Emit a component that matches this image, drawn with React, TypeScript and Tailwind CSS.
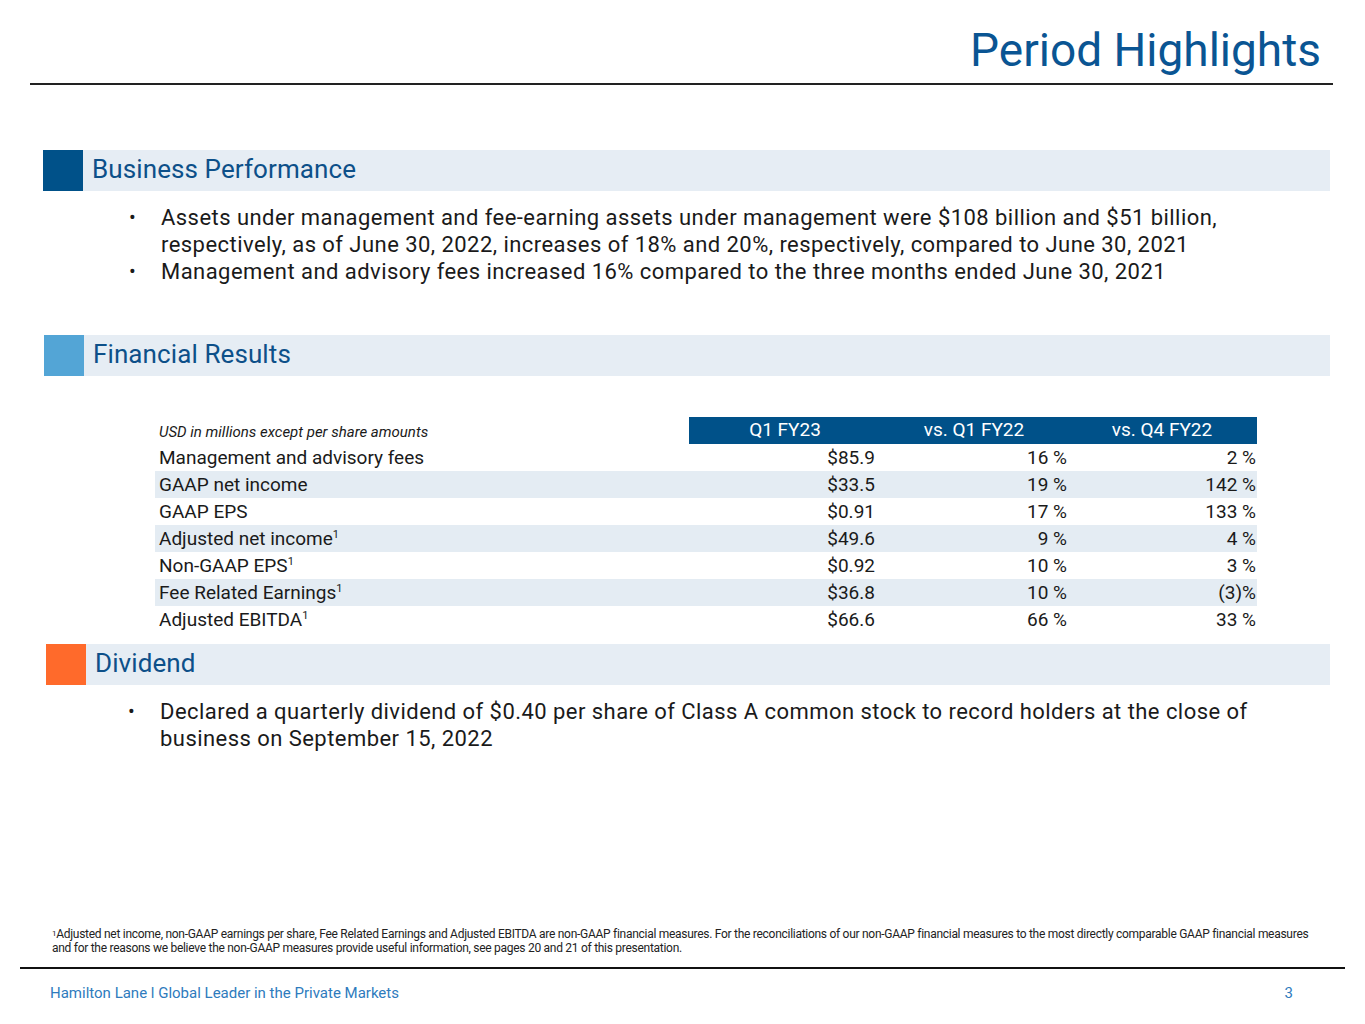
const rows = [
  { label: "Management and advisory fees", sup: false, a: "$85.9", b: "16 %", c: "2 %" },
  { label: "GAAP net income", sup: false, a: "$33.5", b: "19 %", c: "142 %" },
  { label: "GAAP EPS", sup: false, a: "$0.91", b: "17 %", c: "133 %" },
  { label: "Adjusted net income", sup: true, a: "$49.6", b: "9 %", c: "4 %" },
  { label: "Non-GAAP EPS", sup: true, a: "$0.92", b: "10 %", c: "3 %" },
  { label: "Fee Related Earnings", sup: true, a: "$36.8", b: "10 %", c: "(3)%" },
  { label: "Adjusted EBITDA", sup: true, a: "$66.6", b: "66 %", c: "33 %" },
];

function SectionBar({ title, square, offset }: { title: string; square: string; offset: string }) {
  return (
    <div className={`flex h-[41px] items-center bg-[#e6edf4] ${offset} mr-[35px]`}>
      <div className={`h-full w-[40px] ${square}`}></div>
      <div className="pl-[9px] pb-[3px] text-[26px] leading-none tracking-[0.1px] text-[#0d5089]">{title}</div>
    </div>
  );
}

function Bullet({ lines, left }: { lines: string[]; left: string }) {
  return (
    <div className={`flex text-[22px] leading-[27px] tracking-[0.45px] text-[#1a1a1a] ${left}`}>
      <span className="w-[32px] shrink-0 text-[20px]">•</span>
      <span>
        {lines.map((l, i) => (
          <span key={i} className="block whitespace-nowrap">{l}</span>
        ))}
      </span>
    </div>
  );
}

export default function App() {
  return (
    <div className="w-[1365px] h-[1024px] bg-white font-['Roboto',sans-serif] flex flex-col relative overflow-hidden">
      <div className="h-[83px] flex items-end justify-end pr-[44px] pb-[10px]">
        <h1 className="text-[46px] leading-none text-[#0a5593]">Period Highlights</h1>
      </div>
      <div className="mx-[30px] mr-[32px] h-[2px] bg-[#222]"></div>

      <div className="mt-[65px]">
        <SectionBar title="Business Performance" square="bg-[#005189]" offset="ml-[43px]" />
      </div>
      <div className="mt-[13px]">
        <Bullet
          left="ml-[129px]"
          lines={[
            "Assets under management and fee-earning assets under management were $108 billion and $51 billion,",
            "respectively, as of June 30, 2022, increases of 18% and 20%, respectively, compared to June 30, 2021",
          ]}
        />
        <Bullet
          left="ml-[129px]"
          lines={["Management and advisory fees increased 16% compared to the three months ended June 30, 2021"]}
        />
      </div>

      <div className="mt-[50px]">
        <SectionBar title="Financial Results" square="bg-[#53a5d6]" offset="ml-[44px]" />
      </div>

      <div className="mt-[41px] ml-[155px] w-[1102px] text-[19px] text-[#1a1a1a]">
        <div className="flex h-[27px] items-center">
          <div className="w-[534px] pl-[4px] pt-[4px] text-[15px] italic">USD in millions except per share amounts</div>
          <div className="flex flex-1 h-full items-center bg-[#005189] text-white">
            <div className="w-[192px] text-center">Q1 FY23</div>
            <div className="w-[186px] text-center">vs. Q1 FY22</div>
            <div className="flex-1 text-center">vs. Q4 FY22</div>
          </div>
        </div>
        {rows.map((r, i) => (
          <div key={r.label} className={`flex h-[27px] items-center leading-[27px] ${i % 2 === 1 ? "bg-[#e4ecf3]" : ""}`}>
            <div className="w-[534px] pl-[4px] flex items-start">
              <span>{r.label}</span>
              {r.sup && <span className="text-[11px] leading-none mt-[4px]">1</span>}
            </div>
            <div className="w-[186px] text-right">{r.a}</div>
            <div className="w-[192px] text-right">{r.b}</div>
            <div className="flex-1 text-right pr-[1px]">{r.c}</div>
          </div>
        ))}
      </div>

      <div className="mt-[11px]">
        <SectionBar title="Dividend" square="bg-[#ff6a2b]" offset="ml-[46px]" />
      </div>
      <div className="mt-[13px]">
        <Bullet
          left="ml-[128px]"
          lines={[
            "Declared a quarterly dividend of $0.40 per share of Class A common stock to record holders at the close of",
            "business on September 15, 2022",
          ]}
        />
      </div>

      <div className="flex-1"></div>
      <div className="ml-[52px] text-[12px] leading-[14px] text-[#222] tracking-[-0.28px]">
        <div className="whitespace-nowrap">
          <span className="text-[8px] align-top">1</span>Adjusted net income, non-GAAP earnings per share, Fee Related Earnings and Adjusted EBITDA are non-GAAP financial measures. For the reconciliations of our non-GAAP financial measures to the most directly comparable GAAP financial measures
        </div>
        <div className="whitespace-nowrap">
          and for the reasons we believe the non-GAAP measures provide useful information, see pages 20 and 21 of this presentation.
        </div>
      </div>
      <div className="mt-[12px] mx-[20px] h-[2px] bg-[#111]"></div>
      <div className="flex justify-between items-center h-[55px] pl-[50px] pr-[72px] pb-[6px] text-[#2e7bbd]">
        <div className="text-[15px]">Hamilton Lane l Global Leader in the Private Markets</div>
        <div className="text-[15px]">3</div>
      </div>
    </div>
  );
}
